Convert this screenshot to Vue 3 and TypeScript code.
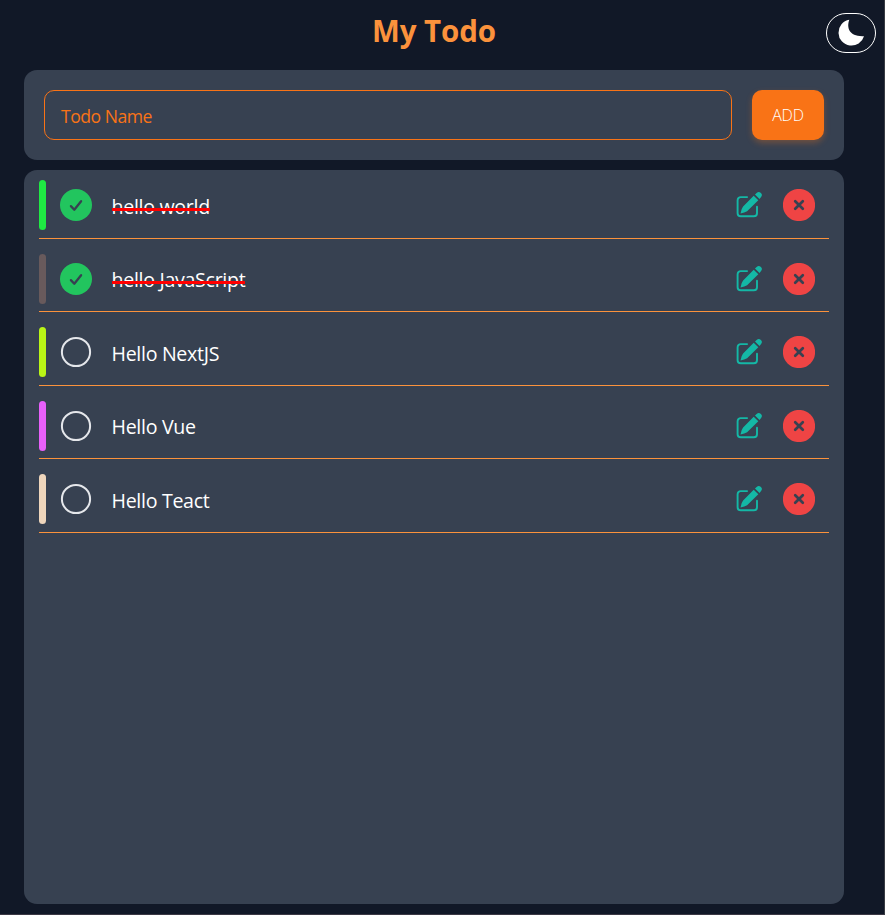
<script setup lang="ts">
import { ref } from 'vue'

interface Todo {
  name: string
  done: boolean
  color: string
}

const draft = ref('')
const todos = ref<Todo[]>([
  { name: 'hello world', done: true, color: '#1fea43' },
  { name: 'hello JavaScript', done: true, color: '#685a5c' },
  { name: 'Hello NextJS', done: false, color: '#baf516' },
  { name: 'Hello Vue', done: false, color: '#e860fb' },
  { name: 'Hello Teact', done: false, color: '#efd6bc' },
])

function add() {
  const name = draft.value.trim()
  if (!name) return
  todos.value.push({ name, done: false, color: '#fb923c' })
  draft.value = ''
}

function remove(index: number) {
  todos.value.splice(index, 1)
}
</script>

<template>
  <div class="page">
    <header class="header">
      <h1 class="title"><span>My Todo</span></h1>
      <button class="theme" type="button">
        <svg width="28" height="28" viewBox="0 0 28 28">
          <path d="M12.3 .8C9.3 9 12.5 18 27 17.2A13 13 0 1 1 12.3 .8Z" fill="#fff" />
        </svg>
      </button>
    </header>
    <main class="content">
      <form class="panel entry" @submit.prevent="add">
        <input v-model="draft" class="field" type="text" placeholder="Todo Name" />
        <button class="add" type="submit">ADD</button>
      </form>
      <section class="panel list">
        <div v-for="(todo, i) in todos" :key="i" class="row">
          <span class="bar" :style="{ background: todo.color }"></span>
          <button class="icon check" type="button" @click="todo.done = !todo.done">
            <svg width="32" height="32" viewBox="0 0 32 32" fill="none">
              <template v-if="todo.done">
                <circle cx="16" cy="16" r="16" fill="#22c55e" />
                <path d="M10.9 17.1l3.4 3.6 6.8-8.5" stroke="#374151" stroke-width="2.3" stroke-linecap="round" stroke-linejoin="round" />
              </template>
              <circle v-else cx="16" cy="16" r="14.1" stroke="#e5e7eb" stroke-width="2" />
            </svg>
          </button>
          <span class="label"><span :class="['name', { done: todo.done }]">{{ todo.name }}</span></span>
          <button class="icon edit" type="button">
            <svg width="27" height="27" viewBox="0 0 27 27" fill="none">
              <path d="M11.1 6.1H4.7a3.1 3.1 0 0 0-3.1 3.1v13a3.1 3.1 0 0 0 3.1 3.1H17.9a3.1 3.1 0 0 0 3.1-3.1V15.8" stroke="#14b8a6" stroke-width="1.9" stroke-linecap="round" />
              <path d="M17.7 4.7l4.6 4.5-11.2 11q-2.4 1.5-6.6 2.3 .7-4.6 2.6-6.9zM19 3.6l1.6-1.6a3 3 0 0 1 4.3 0 3 3 0 0 1 0 4.2L23.5 7.9z" fill="#14b8a6" />
            </svg>
          </button>
          <button class="icon delete" type="button" @click="remove(i)">
            <svg width="32" height="32" viewBox="0 0 32 32" fill="none">
              <circle cx="16" cy="16" r="16.1" fill="#ef4444" />
              <path d="M12.2 12.2l7.6 7.6M19.8 12.2l-7.6 7.6" stroke="#374151" stroke-width="2.7" stroke-linecap="round" />
            </svg>
          </button>
        </div>
      </section>
    </main>
  </div>
</template>

<style>
body {
  background: #111827;
}
</style>

<style scoped>
.page {
  box-sizing: border-box;
  width: 885px;
  height: 915px;
  display: flex;
  flex-direction: column;
  overflow: hidden;
  background: #111827;
  border-right: 1px solid #393c43;
  border-bottom: 1px solid #3b3844;
  font-family: 'Open Sans', 'Noto Sans', sans-serif;
}
button {
  padding: 0;
  border: 0;
  background: none;
  font-family: inherit;
  cursor: pointer;
}
svg {
  display: block;
}
.header {
  flex: none;
  display: grid;
  grid-template-columns: 1fr 50px;
  height: 70px;
  padding-right: 8px;
}
.title {
  margin: 0;
  padding: 11px 0 0 42px;
  text-align: center;
  font-size: 29.5px;
  line-height: 40px;
  font-weight: 700;
  letter-spacing: -0.1px;
  color: #fb923c;
}
.theme {
  box-sizing: border-box;
  display: grid;
  place-items: center;
  width: 50px;
  height: 40px;
  margin-top: 13px;
  border: 1px solid #fff;
  border-radius: 20px;
}
.content {
  flex: 1;
  display: flex;
  flex-direction: column;
  gap: 10px;
  padding: 0 40px 10px 24px;
}
.panel {
  box-sizing: border-box;
  border-radius: 13px;
  background: #374151;
}
.entry {
  display: flex;
  gap: 20px;
  height: 90px;
  padding: 20px;
}
.field {
  box-sizing: border-box;
  flex: 1;
  min-width: 0;
  height: 50px;
  padding: 2px 16px 0;
  border: 1px solid #f97316;
  border-radius: 10px;
  outline: none;
  background: transparent;
  color: #f97316;
  font-family: inherit;
  font-size: 17.6px;
  letter-spacing: -0.5px;
}
.field::placeholder {
  color: #f97316;
  opacity: 1;
}
.add {
  width: 72px;
  height: 50px;
  border-radius: 10px;
  background: #f97316;
  box-shadow: 0 3px 6px rgba(249, 115, 22, 0.3);
  color: #fff;
  font-size: 16px;
  font-weight: 300;
  letter-spacing: -0.2px;
}
.list {
  flex: 1;
  padding: 10.2px 15px;
}
.row {
  box-sizing: border-box;
  display: flex;
  align-items: flex-start;
  height: 58.7px;
  margin-bottom: 14.8px;
  border-bottom: 1px solid #fb923c;
}
.bar {
  width: 7px;
  height: 50px;
  border-radius: 4px;
}
.icon {
  flex: none;
}
.check {
  margin: 9px 0 0 14px;
}
.label {
  flex: 1;
  margin-left: 19.5px;
  padding-top: 12.8px;
  font-size: 19.6px;
  line-height: 28px;
  letter-spacing: -0.3px;
  color: #fff;
}
.name {
  display: inline-block;
  position: relative;
}
.done::after {
  content: '';
  position: absolute;
  top: 14.8px;
  left: 0;
  right: 0;
  height: 3px;
  background: #f00;
}
.edit {
  margin-top: 11px;
}
.delete {
  margin: 9px 14px 0 20px;
}
</style>
